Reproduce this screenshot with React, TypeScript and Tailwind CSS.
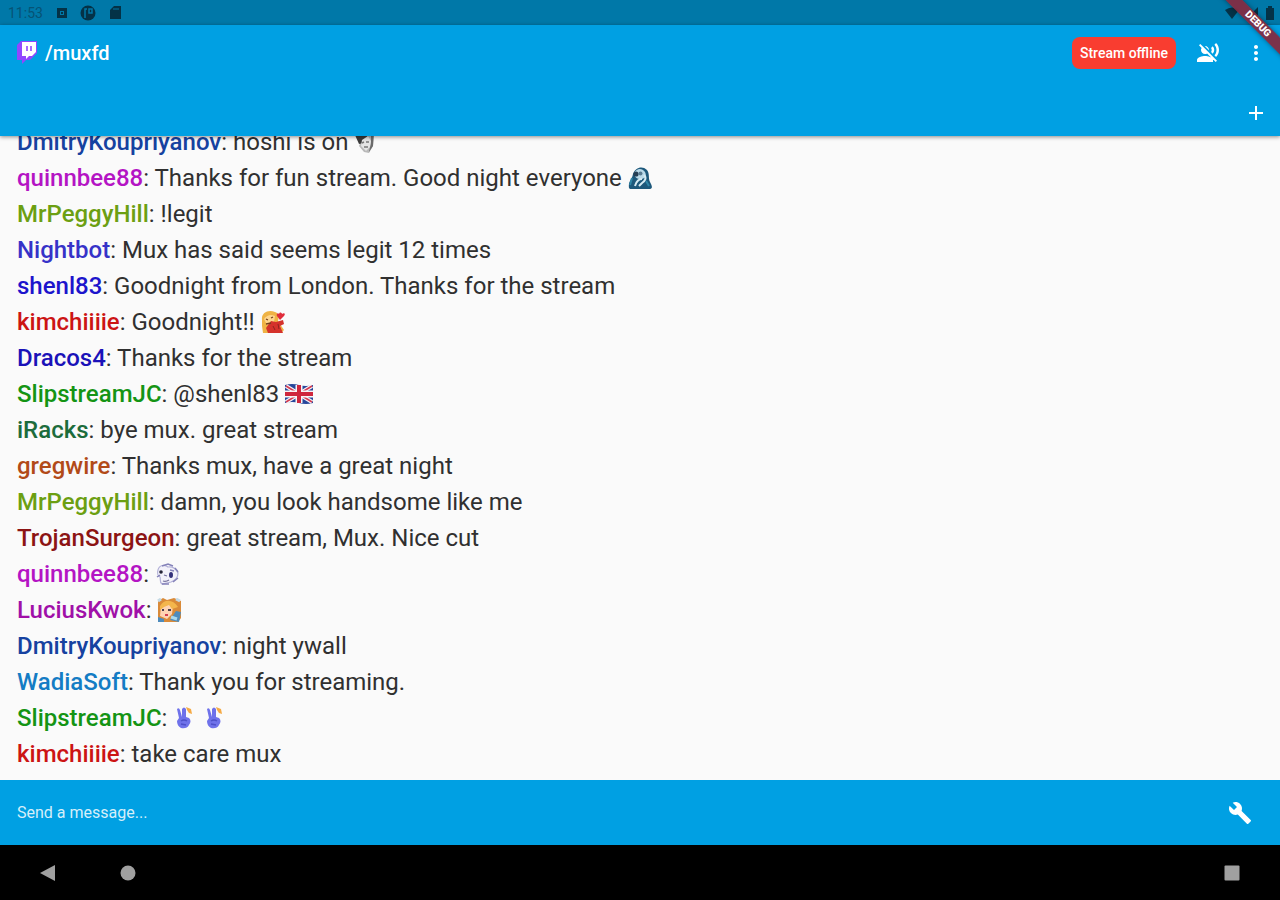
import type { ReactNode } from 'react';
import { MdAdd, MdBuild, MdMoreVert, MdVoiceOverOff } from 'react-icons/md';

const emote = 'inline-block h-6 w-6 align-[-4px]';

function HelmetEmote() {
  return (
    <svg className={emote} viewBox="0 0 24 24" role="img" aria-label="helmet emote">
      <path d="M3 5 9 1l11 1-1 14-4 7-5-1-5-6 2-5z" fill="#b9b9b9" />
      <path d="M1 5 8 1l6 3-1 4-3 5-5 1z" fill="#3b3b3b" />
      <path d="M17 2l3 0-1 14-4 6 2-10z" fill="#6c6c6c" />
      <path d="M8 10l6-4 3 5-1 6-4 4-5-5z" fill="#e4e4e4" />
      <path d="M8 13l2-1M12 12h3M10 17h4" stroke="#777" strokeWidth="1.5" />
    </svg>
  );
}

function HoodEmote() {
  return (
    <svg className={emote} viewBox="0 0 24 24" role="img" aria-label="hooded emote">
      <path d="M1 22C0 15 4 14 5 8 7 2 14-1 19 4c3 4 1 8 3 12 2 4 3 6 0 7H2z" fill="#1d587b" />
      <path d="M6 7c3-5 8-5 11-1 2 4 0 6-3 7-4 1-8-2-8-6z" fill="#b9d9e8" />
      <circle cx="8" cy="8" r="2.6" fill="#263f55" />
      <circle cx="12.500" cy="7.500" r="2" fill="#587b92" />
      <path d="M14 13c-5 0-6 4-7 7M16 9c3 3 1 6-2 8l-3 3" stroke="#d5eaf2" strokeWidth="2" fill="none" />
      <path d="M4 12l-2 7M18 15l3 5" stroke="#2f86a7" strokeWidth="2" />
    </svg>
  );
}

function HeartEmote() {
  return (
    <svg className={emote} viewBox="0 0 24 24" role="img" aria-label="heart emote">
      <path d="M1 10C0 3 7-1 14 2c4 1 4 6 3 9l6 9-3 3H2l-1-7z" fill="#efb345" />
      <path d="M3 9c3-4 7-5 11-3l-1 6-7 3z" fill="#ffd58c" />
      <path d="M5 18l5-7 5 1 7-2 1 4-4 2 3 7H7z" fill="#d5322b" />
      <path d="M18 4c1-3 3-1 3 0 2-2 4 0 2 2l-4 4-3-4c-1-2 1-4 2-2z" fill="#e02c3b" />
      <path d="M5 9l2 1M10 8l2-1M5 14l5-1" stroke="#76401e" strokeWidth="1.300" />
      <path d="M12 16l2 4M17 14l1 5" stroke="#8e241e" strokeWidth="1" />
    </svg>
  );
}

function UnionFlag() {
  return (
    <svg className="inline-block h-6 w-7 align-[-4px]" viewBox="0 0 28 24" role="img" aria-label="United Kingdom flag">
      <path d="M0 3q7-2 14 0t14 0v18q-7 2-14 0T0 21z" fill="#28479b" />
      <path d="M1 4l26 16M27 4L1 20" stroke="#f5f3f6" strokeWidth="4" />
      <path d="M1 4l26 16M27 4L1 20" stroke="#d43a50" strokeWidth="1.500" />
      <path d="M14 3v18M0 12h28" stroke="#f8f5f7" strokeWidth="7" />
      <path d="M14 3v18M0 12h28" stroke="#cf263d" strokeWidth="4" />
    </svg>
  );
}

function DogEmote() {
  return (
    <svg className={emote} viewBox="0 0 24 24" role="img" aria-label="dog emote">
      <path d="M3 8c1-5 7-6 10-3 4-1 9 2 10 6 0 5-4 8-7 9l-9 2c-3-2-1-5-2-7-2-1-3-4-2-7z" fill="#f3f2fa" stroke="#b3b1d8" strokeWidth="1.200" />
      <path d="M2 15l3-2M7 4l6-2 5 2M20 6l3 4M7 22h7M18 20l5-4M15 8l4 1" stroke="#8583b9" strokeWidth="1.500" fill="none" />
      <circle cx="6" cy="10" r="1.800" fill="#242437" />
      <ellipse cx="16" cy="13" rx="2" ry="3" fill="#34327b" />
      <path d="M9 13l3 1M8 19q3 1 6-1" stroke="#77739e" strokeWidth="1.300" fill="none" />
    </svg>
  );
}

function PrincessEmote() {
  return (
    <svg className={emote} viewBox="0 0 24 24" role="img" aria-label="princess emote">
      <path d="M1 3 6 0l4 2 7-2 7 3v17l-3 4H1z" fill="#d98a38" />
      <path d="M4 9c3-4 8-5 12-1l-1 8-5 5-7-3z" fill="#ffd4b3" />
      <path d="M3 8c4-7 13-7 18 1l-6 2-3-4-5 2-4 3z" fill="#f3b64c" />
      <path d="M13 22l6-9 5 1-2 10M1 19l6 2v3H1z" fill="#4d8bbc" />
      <path d="M14 19l6 2" stroke="#a7d9ef" strokeWidth="3" />
      <path d="M5 12h2M11 12h3" stroke="#4d3f4a" strokeWidth="2" />
      <path d="M8 17h3" stroke="#d33f50" strokeWidth="2" />
      <path d="M1 3l3-2M19 1l4 2" stroke="#c5dae5" strokeWidth="3" />
    </svg>
  );
}

function PeaceEmote() {
  return (
    <svg className={emote} viewBox="0 0 24 24" role="img" aria-label="peace hand emote">
      <path d="M4 3q2-2 3 1l2 7V3q2-3 4 0v8l3 1q3 3 0 7-2 4-8 3-4-2-4-7l2-3z" fill="#6f72ea" />
      <path d="M8 15q3-2 6 0M8 18l5 1" stroke="#4d50c9" strokeWidth="1.500" fill="none" />
      <path d="M13 1l5 2 1 5-3-1-2-3z" fill="#f5aa45" />
    </svg>
  );
}

type Message = { name: string; color: string; body: ReactNode };

const messages: Message[] = [
  { name: 'DmitryKoupriyanov', color: 'text-[#1642a0]', body: <>hoshi is on <HelmetEmote /></> },
  { name: 'quinnbee88', color: 'text-[#b414c4]', body: <>Thanks for fun stream. Good night everyone <HoodEmote /></> },
  { name: 'MrPeggyHill', color: 'text-[#6c9f12]', body: '!legit' },
  { name: 'Nightbot', color: 'text-[#3632c8]', body: 'Mux has said seems legit 12 times' },
  { name: 'shenl83', color: 'text-[#1c14cc]', body: 'Goodnight from London. Thanks for the stream' },
  { name: 'kimchiiiie', color: 'text-[#cc1414]', body: <>Goodnight!! <HeartEmote /></> },
  { name: 'Dracos4', color: 'text-[#1a12b8]', body: 'Thanks for the stream' },
  { name: 'SlipstreamJC', color: 'text-[#149414]', body: <>@shenl83 <UnionFlag /></> },
  { name: 'iRacks', color: 'text-[#1c6c3c]', body: 'bye mux. great stream' },
  { name: 'gregwire', color: 'text-[#b24a18]', body: 'Thanks mux, have a great night' },
  { name: 'MrPeggyHill', color: 'text-[#6c9f12]', body: 'damn, you look handsome like me' },
  { name: 'TrojanSurgeon', color: 'text-[#8c1414]', body: 'great stream, Mux. Nice cut' },
  { name: 'quinnbee88', color: 'text-[#b414c4]', body: <DogEmote /> },
  { name: 'LuciusKwok', color: 'text-[#a010a8]', body: <PrincessEmote /> },
  { name: 'DmitryKoupriyanov', color: 'text-[#1642a0]', body: 'night ywall' },
  { name: 'WadiaSoft', color: 'text-[#147cc4]', body: 'Thank you for streaming.' },
  { name: 'SlipstreamJC', color: 'text-[#149414]', body: <><PeaceEmote /> <PeaceEmote /></> },
  { name: 'kimchiiiie', color: 'text-[#cc1414]', body: 'take care mux' },
];

function StatusBar() {
  return (
    <div className="flex h-[25px] shrink-0 items-center justify-between bg-[#0078a8] pl-2 pr-1 text-[#043247]">
      <div className="flex items-center gap-3">
        <span className="w-9 text-sm leading-6 text-[#065375]">11:53</span>
        <svg className="h-3 w-3" viewBox="0 0 12 12" aria-hidden="true">
          <path fillRule="evenodd" d="M1 1h10v10H1zM4 4v4h4V4z" fill="currentColor" />
          <path d="M5 5h2v2H5z" fill="currentColor" />
        </svg>
        <svg className="h-4 w-4" viewBox="0 0 16 16" aria-hidden="true">
          <circle cx="8" cy="8" r="7.500" fill="currentColor" />
          <path d="M5 13V4h2M9 4h3v4H9z" stroke="#0078a8" strokeWidth="1.500" fill="none" />
        </svg>
        <svg className="h-4 w-4" viewBox="0 0 16 16" aria-hidden="true">
          <path d="M6 1h7v13H2V5z" fill="currentColor" />
          <path d="M6 3v2M8 3v2M10 3v2" stroke="#0078a8" strokeWidth="1" />
        </svg>
      </div>
      <div className="flex items-center gap-1">
        <svg className="h-4 w-4" viewBox="0 0 16 16" aria-hidden="true">
          <path d="M1 5q7-5 14 0l-7 9z" fill="currentColor" />
        </svg>
        <svg className="h-4 w-4" viewBox="0 0 16 16" aria-hidden="true">
          <path d="M2 14 14 2v12z" fill="currentColor" />
        </svg>
        <svg className="h-4 w-3" viewBox="0 0 12 16" aria-hidden="true">
          <path d="M2 3h2V1h4v2h2v12H2z" fill="currentColor" />
        </svg>
      </div>
    </div>
  );
}

function TwitchLogo() {
  return (
    <svg className="h-6 w-5" viewBox="0 0 20 24" aria-hidden="true">
      <path d="M4 0h16v12l-7 7H9l-4 4v-4H0V4z" fill="#9146ff" />
      <path d="M5 1h14v10l-4 4h-3l-3 3v-3H5z" fill="#fff" />
      <path d="M10 5v5M14 5v5" stroke="#9146ff" strokeWidth="1.600" />
    </svg>
  );
}

export default function App() {
  return (
    <div className="relative flex h-screen flex-col overflow-hidden bg-[#fafafa] font-['Roboto',sans-serif]">
      <StatusBar />
      <header className="z-10 shrink-0 bg-[#00a0e3] text-white shadow-[0_1px_4px_rgba(0,0,0,0.45)]">
        <div className="flex h-14 items-center justify-between pl-[17px] pr-3">
          <h1 className="flex items-center gap-2 text-xl font-medium">
            <TwitchLogo />
            /muxfd
          </h1>
          <div className="flex items-center">
            <span className="mr-5 rounded-lg bg-[#f93d30] p-2 text-sm font-medium leading-4">Stream offline</span>
            <button type="button" aria-label="Mute voice" className="mr-6">
              <MdVoiceOverOff size={24} />
            </button>
            <button type="button" aria-label="More options">
              <MdMoreVert size={24} />
            </button>
          </div>
        </div>
        <div className="flex h-[55px] items-start justify-end pr-3 pt-5">
          <button type="button" aria-label="Add channel">
            <MdAdd size={24} />
          </button>
        </div>
      </header>

      <main className="flex min-h-0 flex-1 flex-col justify-end overflow-hidden px-[17px] pb-2">
        <ul>
          {messages.map((message, index) => (
            <li key={index} className="h-9 whitespace-nowrap text-2xl leading-9 text-[#303030]">
              <span className={`font-medium ${message.color}`}>{message.name}</span>: {message.body}
            </li>
          ))}
        </ul>
      </main>

      <form className="flex h-[65px] shrink-0 items-center bg-[#00a0e3] pl-[17px] pr-7 text-white">
        <input
          type="text"
          aria-label="Send a message"
          placeholder="Send a message..."
          className="min-w-0 flex-1 bg-transparent text-base leading-6 text-white outline-none placeholder:text-[#d5effa]"
        />
        <button type="button" aria-label="Tools">
          <MdBuild size={24} />
        </button>
      </form>

      <nav className="flex h-[55px] shrink-0 items-center justify-between bg-black px-10 text-[#a0a0a0]">
        <div className="flex gap-16">
          <button type="button" aria-label="Back">
            <svg className="h-4 w-4" viewBox="0 0 16 16">
              <path d="M15 0v16L0 8z" fill="currentColor" />
            </svg>
          </button>
          <button type="button" aria-label="Home">
            <svg className="h-4 w-4" viewBox="0 0 16 16">
              <circle cx="8" cy="8" r="7.500" fill="currentColor" />
            </svg>
          </button>
        </div>
        <button type="button" aria-label="Recent apps">
          <svg className="h-4 w-4" viewBox="0 0 16 16">
            <rect x="0.500" y="0.500" width="15" height="15" rx="1" fill="currentColor" />
          </svg>
        </button>
      </nav>

      <div className="pointer-events-none absolute -right-7 top-[18px] z-20 h-3 w-25 rotate-45 bg-[#822c42]/95 text-center text-[10px] font-black leading-3 text-white shadow-[0_0_5px_rgba(0,0,0,0.4)]">
        DEBUG
      </div>
    </div>
  );
}
